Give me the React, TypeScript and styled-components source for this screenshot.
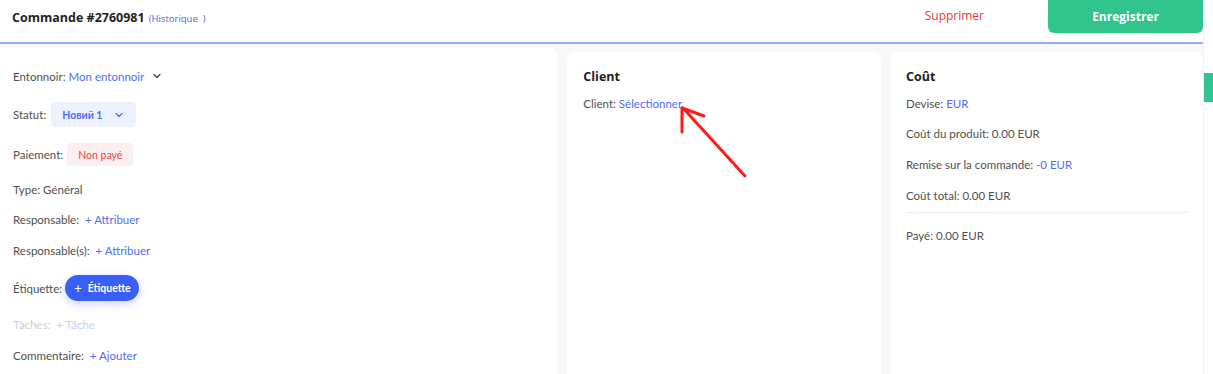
import React from "react";
import styled, { createGlobalStyle } from "styled-components";
import { ChevronDown } from "lucide-react";

const GlobalStyle = createGlobalStyle`
  body {
    margin: 0;
    background: #ffffff;
    font-family: "Lato", "Open Sans", sans-serif;
  }
`;

const Page = styled.div`
  position: relative;
  width: 1213px;
  height: 374px;
  overflow: hidden;
  display: flex;
  background: #ffffff;
`;

const Main = styled.div`
  width: 1203px;
  display: flex;
  flex-direction: column;
`;

const Header = styled.header`
  height: 42px;
  display: flex;
  align-items: flex-start;
  border-bottom: 2px solid #94a9ff;
  padding-left: 12px;
`;

const TitleBlock = styled.div`
  flex: 1;
  padding-top: 9px;
  display: flex;
  align-items: baseline;
  gap: 4px;
`;

const Title = styled.h1`
  margin: 0;
  font-family: "Open Sans", sans-serif;
  font-size: 12.5px;
  font-weight: 700;
  color: #1f1f1f;
`;

const History = styled.a`
  font-family: "Open Sans", sans-serif;
  font-size: 9.5px;
  color: #4f68d8;
  white-space: pre;
`;

const DeleteButton = styled.button`
  margin-top: 7px;
  margin-right: 64px;
  border: none;
  background: none;
  padding: 0;
  font-family: "Open Sans", sans-serif;
  font-size: 12px;
  color: #e4393f;
`;

const SaveButton = styled.button`
  width: 155px;
  height: 33px;
  border: none;
  border-radius: 0 0 6px 6px;
  background: #32c48d;
  color: #ffffff;
  font-family: "Open Sans", sans-serif;
  font-size: 12px;
  font-weight: 700;
`;

const Body = styled.div`
  flex: 1;
  display: flex;
  gap: 9px;
  padding-top: 4px;
  background: #f7f8fa;
`;

const Panel = styled.section<{ $w: number; $top?: number }>`
  width: ${(p) => p.$w}px;
  margin-top: ${(p) => p.$top ?? 0}px;
  background: #ffffff;
  border-radius: 8px 8px 0 0;
  padding: 0 16px;
  box-sizing: border-box;
  color: #4f4f4f;
  font-size: 11.5px;
`;

const LeftPanel = styled(Panel)`
  padding: 20px 13px 0;
  border-radius: 0 8px 0 0;
`;

const Row = styled.div<{ $mt?: number; $muted?: boolean }>`
  display: flex;
  align-items: center;
  margin-top: ${(p) => p.$mt ?? 15}px;
  min-height: 16px;
  color: ${(p) => (p.$muted ? "#cfcfcf" : "#4f4f4f")};
  white-space: pre;
`;

const Link = styled.span<{ $muted?: boolean }>`
  color: ${(p) => (p.$muted ? "#c8d2fb" : "#4d6ef5")};
`;

const Badge = styled.span<{ $tone: "blue" | "red" }>`
  display: inline-flex;
  align-items: center;
  gap: 8px;
  height: ${(p) => (p.$tone === "blue" ? 25 : 23)}px;
  padding: 0 11px;
  margin-left: ${(p) => (p.$tone === "blue" ? 5 : 4)}px;
  border-radius: 4px;
  font-size: 10.5px;
  font-weight: ${(p) => (p.$tone === "blue" ? 700 : 400)};
  background: ${(p) => (p.$tone === "blue" ? "#eef2ff" : "#fdeff0")};
  color: ${(p) => (p.$tone === "blue" ? "#4d6ef5" : "#e3474c")};
`;

const TagButton = styled.button`
  display: inline-flex;
  align-items: center;
  gap: 6px;
  height: 26px;
  margin-left: 3px;
  padding: 0 8px 0 9px;
  border: none;
  border-radius: 13px;
  background: #3a5ef8;
  color: #ffffff;
  font-family: "Lato", sans-serif;
  font-size: 10.5px;
  font-weight: 700;
  box-shadow: 0 3px 8px rgba(58, 94, 248, 0.25);
`;

const Plus = styled.span`
  font-size: 13px;
  font-weight: 400;
`;

const Heading = styled.h2`
  margin: 0;
  padding-top: 16px;
  font-family: "Open Sans", sans-serif;
  font-size: 12.5px;
  font-weight: 700;
  color: #222222;
`;

const Line = styled.div<{ $mt?: number }>`
  margin-top: ${(p) => p.$mt ?? 15}px;
  line-height: 16px;
  white-space: pre;
`;

const Divider = styled.hr`
  border: none;
  border-top: 1px solid #eeeeee;
  margin: 8px 0 0;
  width: 282px;
`;

const SideStrip = styled.div`
  width: 10px;
  padding-top: 73px;
  border-left: 1px solid #f1f2f5;
  box-sizing: border-box;
`;

const SideTab = styled.div`
  height: 29px;
  background: #32c48d;
`;

const Arrow = styled.svg`
  position: absolute;
  left: 675px;
  top: 100px;
`;

export default function App() {
  return (
    <>
      <GlobalStyle />
      <Page>
        <Main>
          <Header>
            <TitleBlock>
              <Title>Commande #2760981</Title>
              <History>(Historique  )</History>
            </TitleBlock>
            <DeleteButton>Supprimer</DeleteButton>
            <SaveButton>Enregistrer</SaveButton>
          </Header>
          <Body>
            <LeftPanel $w={559}>
              <Row $mt={0}>
                Entonnoir: <Link>Mon entonnoir</Link>
                <ChevronDown size={12} strokeWidth={2.5} color="#444" style={{ marginLeft: 7 }} />
              </Row>
              <Row $mt={18}>
                Statut:
                <Badge $tone="blue">
                  Новий 1 <ChevronDown size={12} strokeWidth={2.5} />
                </Badge>
              </Row>
              <Row $mt={16}>
                Paiement:<Badge $tone="red">Non payé</Badge>
              </Row>
              <Row>Type: Général</Row>
              <Row $mt={14}>
                Responsable:  <Link>+ Attribuer</Link>
              </Row>
              <Row>
                Responsable(s):  <Link>+ Attribuer</Link>
              </Row>
              <Row $mt={17}>
                Étiquette:
                <TagButton>
                  <Plus>+</Plus>Étiquette
                </TagButton>
              </Row>
              <Row $muted>
                Tâches:  <Link $muted>+ Tâche</Link>
              </Row>
              <Row>
                Commentaire:  <Link>+ Ajouter</Link>
              </Row>
            </LeftPanel>
            <Panel $w={314} $top={4}>
              <Heading>Client</Heading>
              <Line $mt={11}>
                Client: <Link>Sélectionner</Link>
              </Line>
            </Panel>
            <Panel $w={313} $top={4}>
              <Heading>Coût</Heading>
              <Line $mt={11}>
                Devise: <Link>EUR</Link>
              </Line>
              <Line $mt={14}>Coût du produit: 0.00 EUR</Line>
              <Line $mt={15}>
                Remise sur la commande: <Link>-0 EUR</Link>
              </Line>
              <Line $mt={15}>Coût total: 0.00 EUR</Line>
              <Divider />
              <Line $mt={15}>Payé: 0.00 EUR</Line>
            </Panel>
          </Body>
        </Main>
        <SideStrip>
          <SideTab />
        </SideStrip>
        <Arrow width="80" height="85" viewBox="0 0 80 85">
          <g stroke="#ff1a1a" strokeWidth="3" strokeLinecap="round" fill="none">
            <path d="M70 76 L8 8" />
            <path d="M7 8 L29 16" />
            <path d="M7 8 L7 32" />
          </g>
        </Arrow>
      </Page>
    </>
  );
}
